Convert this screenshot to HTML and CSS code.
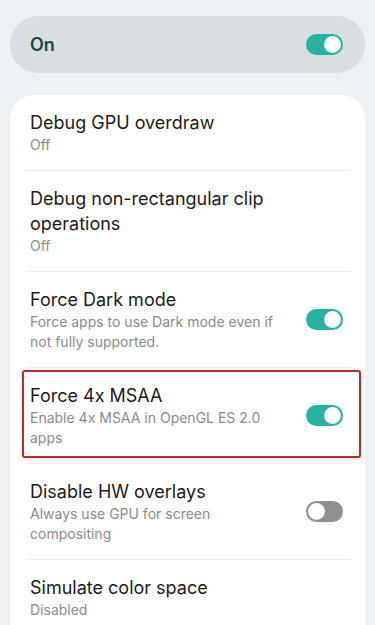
FILE: index.html
```html
<!DOCTYPE html>
<html lang="en">
<head>
    <meta charset="utf-8"/>
    <title>Developer options</title>
    <link rel="stylesheet" href="styles.css">
</head>
<body>
    <div class="master">
        <span class="master-label">On</span>
        <span class="switch on"></span>
    </div>

    <div class="card">
        <div class="row">
            <div class="text">
                <div class="title">Debug GPU overdraw</div>
                <div class="summary">Off</div>
            </div>
        </div>
        <div class="row">
            <div class="text">
                <div class="title">Debug non-rectangular clip operations</div>
                <div class="summary">Off</div>
            </div>
        </div>
        <div class="row">
            <div class="text">
                <div class="title">Force Dark mode</div>
                <div class="summary">Force apps to use Dark mode even if not fully supported.</div>
            </div>
            <span class="switch on"></span>
        </div>
        <div class="row marked">
            <div class="text">
                <div class="title">Force 4x MSAA</div>
                <div class="summary">Enable 4x MSAA in OpenGL ES 2.0 apps</div>
            </div>
            <span class="switch on"></span>
        </div>
        <div class="row">
            <div class="text">
                <div class="title">Disable HW overlays</div>
                <div class="summary">Always use GPU for screen compositing</div>
            </div>
            <span class="switch"></span>
        </div>
        <div class="row">
            <div class="text">
                <div class="title">Simulate color space</div>
                <div class="summary">Disabled</div>
            </div>
        </div>
    </div>
</body>
</html>
```

FILE: styles.css
```css
body {
    margin: 0;
    background: #eef1f3;
    font-family: 'Inter', 'Noto Sans', sans-serif;
    color: #1b1b1b;
    overflow: hidden;
}

.master {
    margin: 16px 10px 0;
    height: 57px;
    border-radius: 28px;
    background: #d9dfe0;
    display: flex;
    align-items: center;
    justify-content: space-between;
    padding: 0 22px 0 20px;
}

.master-label {
    font-size: 18px;
    font-weight: 600;
    color: #1c4842;
}

.card {
    margin: 22px 10px 0;
    background: #ffffff;
    border-radius: 24px;
    padding-bottom: 20px;
}

.row {
    position: relative;
    display: flex;
    align-items: center;
    padding: 15px 22px 16px 20px;
}

.row + .row::before {
    content: '';
    position: absolute;
    top: -1px;
    left: 16px;
    right: 14px;
    height: 1px;
    background: #ececec;
}

.text {
    flex: 1;
    padding-right: 24px;
}

.title {
    font-size: 18px;
    line-height: 25px;
}

.summary {
    font-size: 14px;
    line-height: 20px;
    color: #8b8b8b;
}

.switch {
    flex: none;
    position: relative;
    width: 37px;
    height: 21px;
    border-radius: 11px;
    background: #8f8f8f;
}

.switch::after {
    content: '';
    position: absolute;
    top: 2px;
    left: 2px;
    width: 15px;
    height: 15px;
    border-radius: 50%;
    background: #ffffff;
    border: 1px solid rgba(0, 0, 0, 0.05);
}

.switch.on {
    background: #27b3a0;
}

.switch.on::after {
    left: 18px;
}

.marked::after {
    content: '';
    position: absolute;
    top: 2px;
    left: 12px;
    right: 4px;
    bottom: 6px;
    border: 2px solid #c9252d;
    border-radius: 3px;
    box-shadow: 0 1px 3px rgba(0, 0, 0, 0.15);
}
```
